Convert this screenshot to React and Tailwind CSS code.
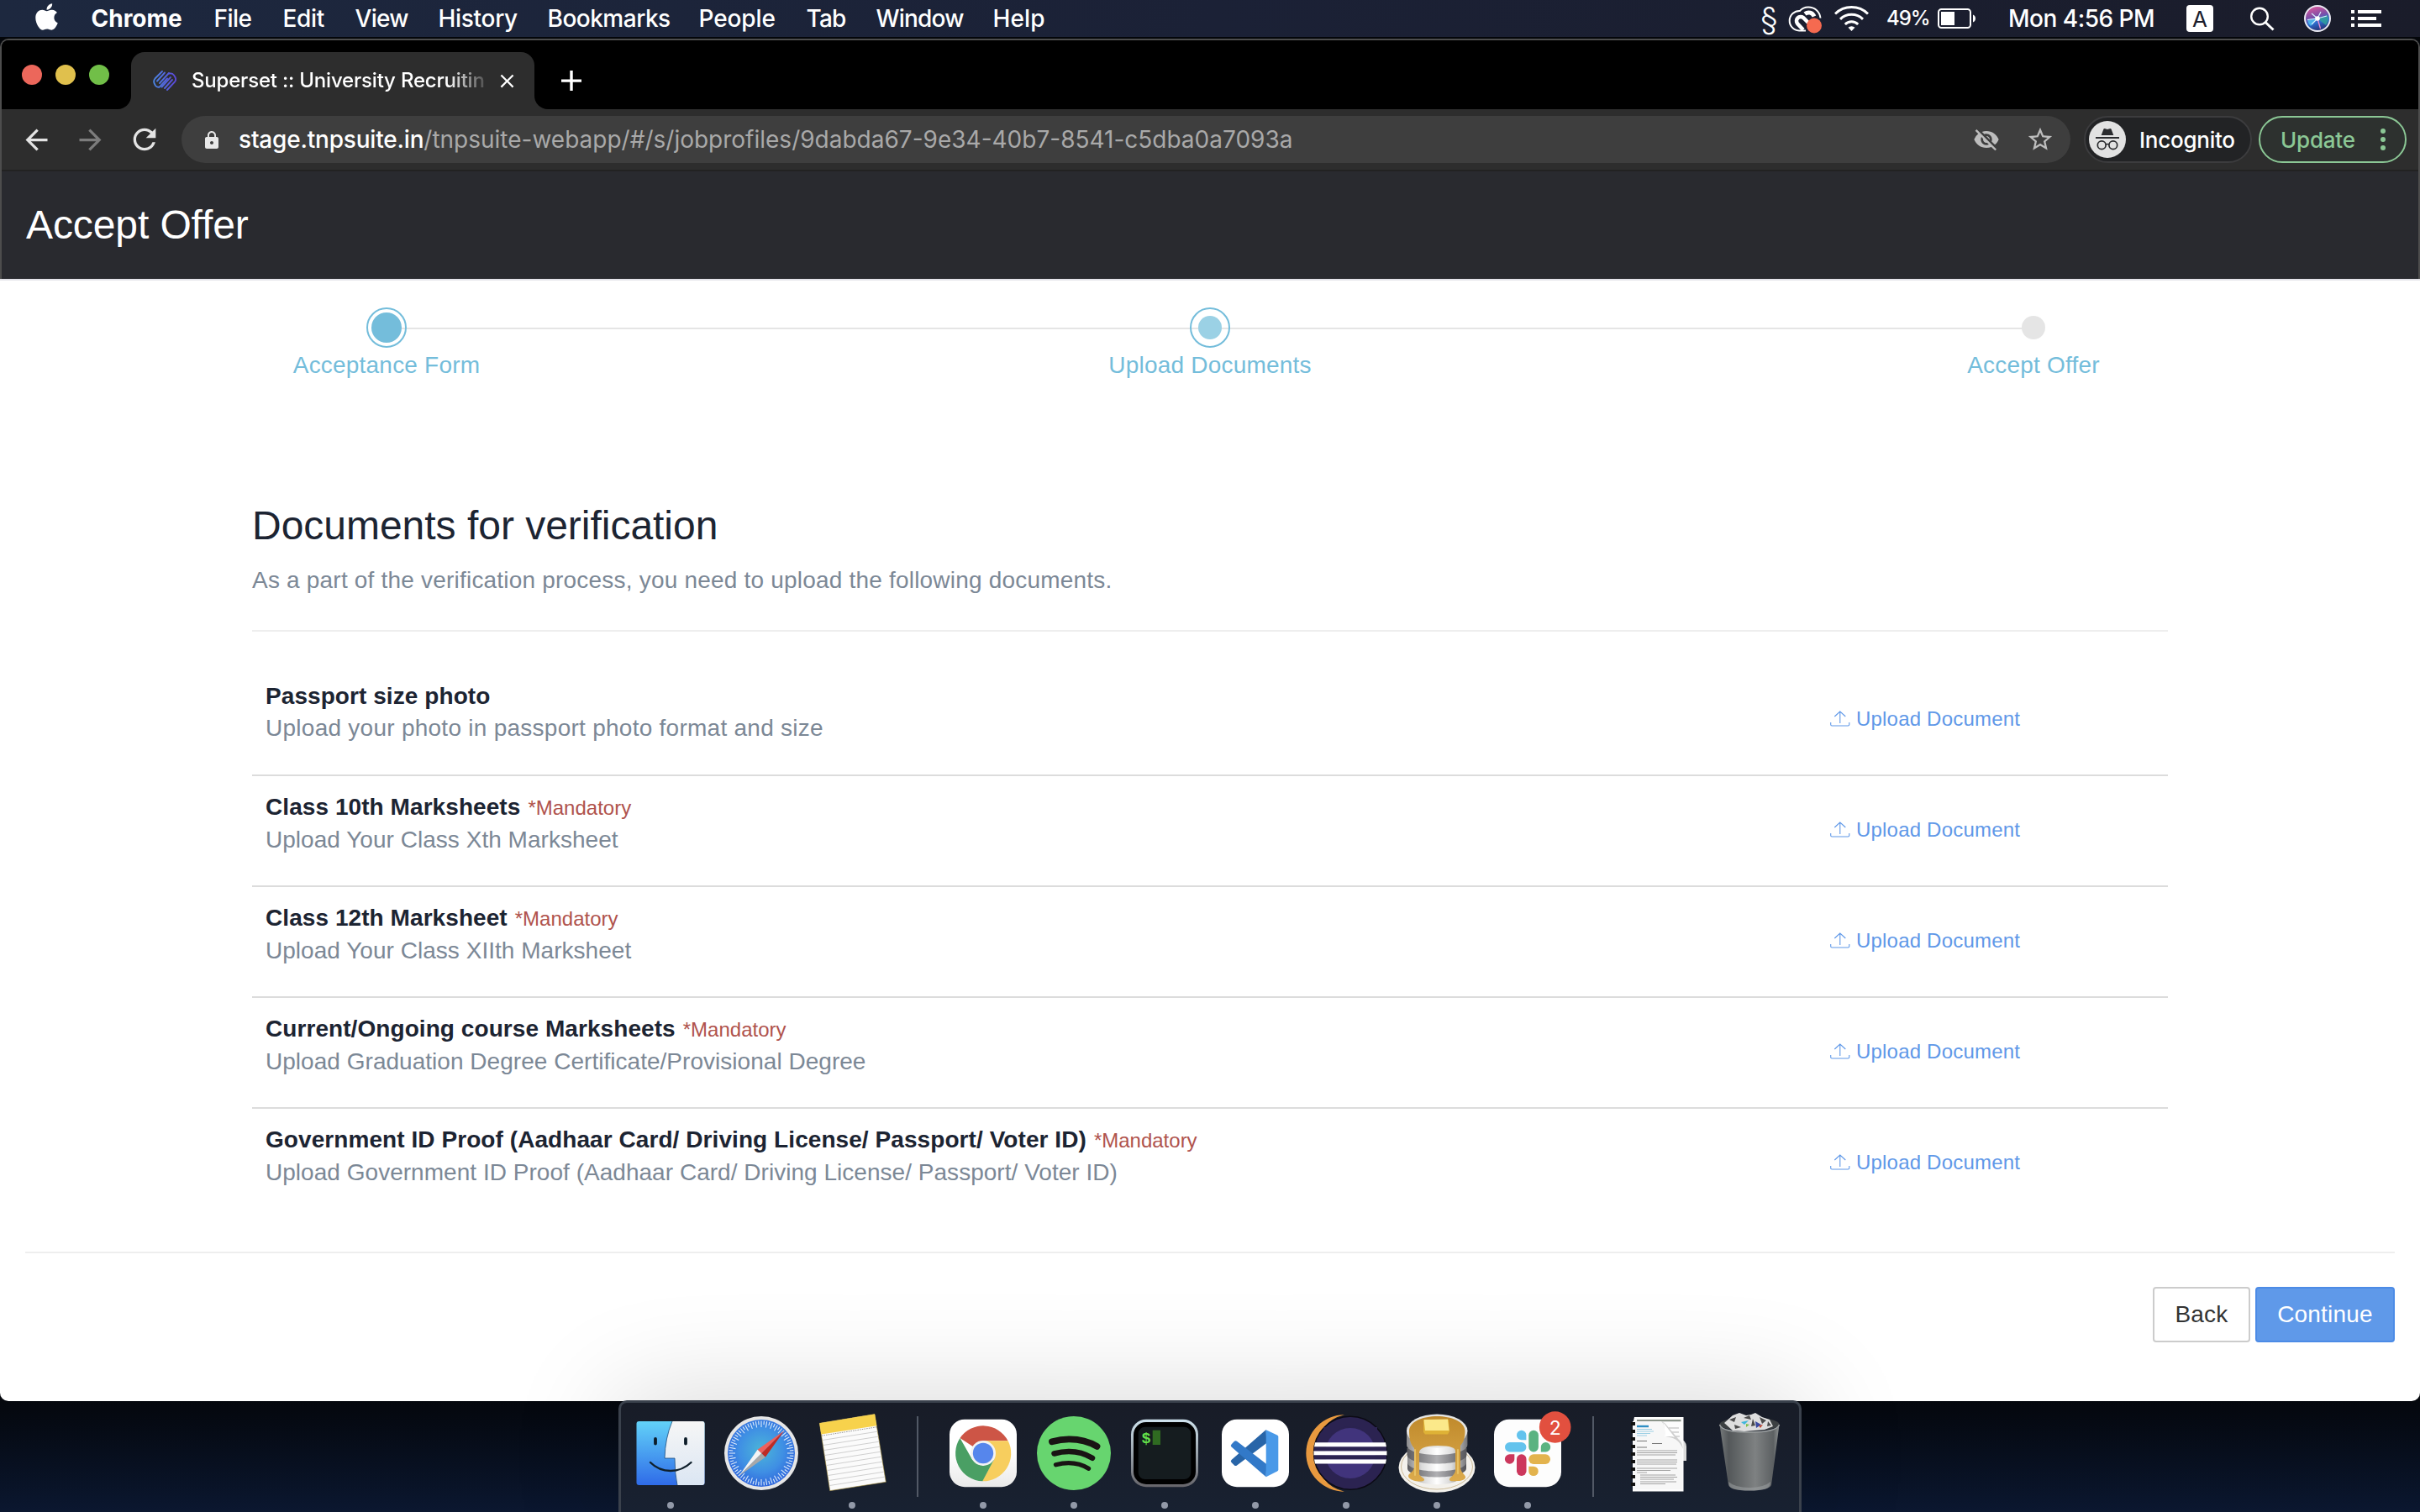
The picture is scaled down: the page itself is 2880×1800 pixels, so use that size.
import React from "react";
import { FaApple } from "react-icons/fa";
import {
  MdArrowBack,
  MdArrowForward,
  MdRefresh,
  MdLock,
  MdVisibilityOff,
  MdStarBorder,
  MdClose,
} from "react-icons/md";

const MENU = [
  ["Chrome", "w-[146px] font-bold"],
  ["File", "w-[82px] tracking-[-0.5px] font-medium"],
  ["Edit", "w-[86px] tracking-[-0.3px] font-medium"],
  ["View", "w-[99px] tracking-[-0.7px] font-medium"],
  ["History", "w-[130px] tracking-[-0.3px] font-medium"],
  ["Bookmarks", "w-[180px] tracking-[-0.5px] font-medium"],
  ["People", "w-[128px] tracking-[-0.1px] font-medium"],
  ["Tab", "w-[83px] tracking-[-0.8px] font-medium"],
  ["Window", "w-[139px] tracking-[-0.8px] font-medium"],
  ["Help", "w-[80px] tracking-[0.1px] font-medium"],
];

const DOCUMENTS = [
  { title: "Passport size photo", note: "Upload your photo in passport photo format and size", mandatory: false },
  { title: "Class 10th Marksheets", note: "Upload Your Class Xth Marksheet", mandatory: true },
  { title: "Class 12th Marksheet", note: "Upload Your Class XIIth Marksheet", mandatory: true },
  { title: "Current/Ongoing course Marksheets", note: "Upload Graduation Degree Certificate/Provisional Degree", mandatory: true },
  {
    title: "Government ID Proof (Aadhaar Card/ Driving License/ Passport/ Voter ID)",
    note: "Upload Government ID Proof (Aadhaar Card/ Driving License/ Passport/ Voter ID)",
    mandatory: true,
  },
];

/* ---------- menu bar ---------- */

function CloudIcon() {
  return (
    <svg className="ml-[13px] h-9 w-10" viewBox="0 0 40 36" fill="none" stroke="#fff" strokeWidth="2">
      <path d="M13 32.500a11.700 11.700 0 1 1 1-23.600C17 5.500 20.500 4.500 24 4.500c7.500 0 13.500 5 14.500 13" />
      <path d="M18 31.500l-7-7.500a5 5 0 0 1 7-7l6 6" strokeWidth="4.500" />
      <path d="M20 12.500c4-3 9-1.500 11 3" strokeWidth="5" />
      <path d="M13 32.500h8" />
      <circle cx="31" cy="26.500" r="9" fill="#f56a50" stroke="none" />
    </svg>
  );
}

function WifiIcon() {
  return (
    <svg className="ml-[15px] h-9 w-[41px]" viewBox="0 0 41 36" fill="none" stroke="#fff" strokeWidth="3">
      <path d="M1 12.500a28 28 0 0 1 39 0" />
      <path d="M7 18.800a19.500 19.500 0 0 1 27 0" />
      <path d="M12.800 25a11 11 0 0 1 15.400 0" />
      <path d="M20.500 33l-4-4.300a6 6 0 0 1 8 0z" fill="#fff" stroke="none" />
    </svg>
  );
}

function BatteryIcon() {
  return (
    <svg className="ml-[7px] h-6 w-[46px]" viewBox="0 0 46 24">
      <rect x="1" y="1" width="38" height="22" rx="3.500" fill="none" stroke="#fff" strokeWidth="2" />
      <rect x="4" y="4" width="16" height="16" fill="#fff" />
      <path d="M42 7.500c4 1 4 8 0 9z" fill="#fff" />
    </svg>
  );
}

function SearchIcon() {
  return (
    <svg className="ml-11 h-[29px] w-[29px]" viewBox="0 0 29 29" fill="none" stroke="#fff" strokeWidth="2.400">
      <circle cx="11" cy="11.500" r="9.800" />
      <path d="M18 18.500l9.500 9" strokeWidth="3" />
    </svg>
  );
}

function SiriIcon() {
  return (
    <svg className="ml-[35px] h-8 w-8" viewBox="0 0 32 32">
      <defs>
        <linearGradient id="siri" x1="0.3" y1="0" x2="0.6" y2="1">
          <stop offset="0" stopColor="#e0569a" />
          <stop offset="0.4" stopColor="#7d4fa8" />
          <stop offset="0.65" stopColor="#2d6fd0" />
          <stop offset="1" stopColor="#262a6b" />
        </linearGradient>
      </defs>
      <circle cx="16" cy="16" r="15" fill="url(#siri)" stroke="#e9e9f2" strokeWidth="2" />
      <path d="M16 16L28 12a13 13 0 0 1-2 12z" fill="#2fa59a" opacity="0.800" />
      <path d="M16 16L4 18a12 12 0 0 0 4 7z" fill="#4cc3f0" opacity="0.800" />
      <path d="M16 16L4 17.500M16 16l11-3M16 16l-7-6M16 16l4-8M16 16l-7 7" stroke="#d9f3ff" strokeWidth="1.200" />
      <path d="M16 16l3.500 12" stroke="#f08fd0" strokeWidth="1.300" />
      <circle cx="16" cy="16" r="2.800" fill="#fff" />
    </svg>
  );
}

function ListIcon() {
  return (
    <svg className="ml-6 h-5 w-9" viewBox="0 0 36 20" fill="#fff">
      <path d="M0 0h4v4H0zM8 0h28v4H8zM0 8h4v4H0zM8 8h22v4H8zM0 16h4v4H0zM8 16h28v4H8z" />
    </svg>
  );
}

function MenuBar() {
  return (
    <div className="flex h-11 items-center bg-linear-to-r from-[#1d283f] via-[#1b2136] to-[#1a1c2a] pl-[42px] pr-[46px] text-[28px] text-white">
      <FaApple className="mb-1 mr-[39.500px] h-9 w-[27px]" />
      {MENU.map(([label, cls]) => (
        <span key={label} className={cls}>
          {label}
        </span>
      ))}
      <div className="ml-auto flex items-center">
        <span className="w-5 text-center text-[38px] leading-[40px] font-light">§</span>
        <CloudIcon />
        <WifiIcon />
        <span className="ml-[21px] w-[54px] whitespace-nowrap text-[24px] font-medium tracking-[-1px]">49%</span>
        <BatteryIcon />
        <span className="ml-[38px] w-[175px] whitespace-nowrap font-medium tracking-[-0.5px]">Mon 4:56 PM</span>
        <span className="ml-[37px] flex h-8 w-8 items-center justify-center rounded bg-white text-[26px] text-[#1b1d2c]">A</span>
        <SearchIcon />
        <SiriIcon />
        <ListIcon />
      </div>
    </div>
  );
}

/* ---------- browser chrome ---------- */

function Favicon() {
  return (
    <svg className="h-6 w-7" viewBox="0 0 28 24" fill="none" strokeWidth="1.900" strokeLinecap="round">
      <defs>
        <linearGradient id="fav" x1="0" y1="0" x2="28" y2="0" gradientUnits="userSpaceOnUse">
          <stop offset="0" stopColor="#4a86e0" />
          <stop offset="1" stopColor="#5b45d6" />
        </linearGradient>
      </defs>
      <g stroke="url(#fav)">
        <path d="M11 1L2.500 9.500Q0.500 12 1.500 15L3 18Q5 20.500 8 19.500L17 9.500" />
        <path d="M14 2.500L5 12.500" />
        <path d="M19 3L8 15" />
        <path d="M17 23L26 13.500Q28 11 26.500 8L25 5.500Q23 3 20 3.500L19 3.500" />
        <path d="M14 21L23 11" />
        <path d="M10.500 19.500L21 8" />
      </g>
    </svg>
  );
}

function TabStrip() {
  return (
    <div className="flex h-[82px] items-end bg-black">
      <div className="mb-[29px] ml-6 flex gap-4">
        <span className="size-6 rounded-full bg-[#ec675b]" />
        <span className="size-6 rounded-full bg-[#e0c04d]" />
        <span className="size-6 rounded-full bg-[#71bf48]" />
      </div>
      <div className="ml-2.5 size-4 bg-[#2d2d2d]">
        <div className="size-4 rounded-br-2xl bg-black" />
      </div>
      <div className="flex h-[68px] w-[480px] items-center rounded-t-2xl bg-[#2d2d2d] pl-[26px]">
        <Favicon />
        <span className="ml-[18px] w-[354px] whitespace-nowrap text-[24px] font-medium tracking-[-0.2px] text-white [mask-image:linear-gradient(to_right,black_305px,transparent_358px)]">
          Superset :: University Recruitin
        </span>
        <MdClose className="ml-[8px] size-[27px] text-white" />
      </div>
      <div className="size-4 bg-[#2d2d2d]">
        <div className="size-4 rounded-bl-2xl bg-black" />
      </div>
      <svg className="mb-[22px] ml-[16px] size-6" viewBox="0 0 24 24" fill="#fff">
        <path d="M0 10.400h24v3.400H0zM10.300 0h3.400v24h-3.400z" />
      </svg>
    </div>
  );
}

function IncognitoBadge() {
  return (
    <svg className="size-11" viewBox="0 0 44 44">
      <circle cx="22" cy="22" r="22" fill="#e2e2e2" />
      <g fill="#2b2c2f">
        <path d="M14.700 17L17.500 9.500q.8-.8 2-.2l2.500.7 2.500-.7q1.200-.6 2 .2L29.300 17z" />
        <rect x="8" y="19" width="28" height="2" />
      </g>
      <g fill="none" stroke="#2b2c2f" strokeWidth="1.700">
        <circle cx="15.200" cy="28.700" r="4.900" />
        <circle cx="28.800" cy="28.700" r="4.900" />
        <path d="M20 28.200q2-1.400 4 0" />
      </g>
    </svg>
  );
}

function Toolbar() {
  return (
    <div className="flex h-[74px] items-center border-b-2 border-[#222] bg-[#2d2d2d] pl-[22px]">
      <MdArrowBack className="size-[39px] text-[#e4e4e4]" />
      <MdArrowForward className="ml-[25px] size-[39px] text-[#7c7c7c]" />
      <MdRefresh className="ml-[25px] size-10 text-[#e4e4e4]" />
      <div className="ml-6 flex h-14 w-[2248px] items-center rounded-full bg-[#3e3e3e] pl-6 text-[28px]">
        <MdLock className="mt-0.5 size-6 text-[#e8e8e8]" />
        <span className="ml-[20px] tracking-[-0.2px] text-white font-medium">stage.tnpsuite.in</span>
        <span className="text-[#a9a9a9]">/tnpsuite-webapp/#/s/jobprofiles/9dabda67-9e34-40b7-8541-c5dba0a7093a</span>
        <MdVisibilityOff className="ml-auto size-8 text-[#bdbdbd]" />
        <MdStarBorder className="ml-[31px] mr-[19px] size-[34px] text-[#bdbdbd]" />
      </div>
      <div className="ml-4 flex h-14 w-[200px] items-center rounded-full border-2 border-[#3c3c3e] bg-[#222325] pl-1 text-[26px] font-medium tracking-[-0.25px] text-white">
        <IncognitoBadge />
        <span className="ml-[16px]">Incognito</span>
      </div>
      <div className="ml-2 flex h-14 w-[176px] items-center rounded-full border-2 border-[#8bc795] bg-[#2d312f] pl-[24px] text-[26px] font-medium tracking-[-0.2px] text-[#8bc795]">
        <span>Update</span>
        <div className="ml-auto mr-[23px] flex flex-col gap-1">
          <span className="size-1.5 rounded-full bg-[#8bc795]" />
          <span className="size-1.5 rounded-full bg-[#8bc795]" />
          <span className="size-1.5 rounded-full bg-[#8bc795]" />
        </div>
      </div>
    </div>
  );
}

/* ---------- page ---------- */

function Step({ label, state }) {
  return (
    <div className="flex w-[320px] flex-col items-center">
      <div
        className={
          state === "todo"
            ? "flex size-12 items-center justify-center"
            : "flex size-12 items-center justify-center rounded-full border-2 border-[#74bddb]"
        }
      >
        {state === "done" && <span className="size-9 rounded-full bg-[#74bddb]" />}
        {state === "current" && <span className="size-7 rounded-full bg-[#9bd1e5]" />}
        {state === "todo" && <span className="size-7 rounded-full bg-[#e5e5e5]" />}
      </div>
      <span className="mt-px whitespace-nowrap text-[28px] leading-[40px] tracking-[0.2px] text-[#74bddb]">{label}</span>
    </div>
  );
}

function Stepper() {
  return (
    <div className="relative">
      <div className="absolute left-[160px] right-[160px] top-6 h-0.5 bg-[#e5e5e5]" />
      <div className="relative flex justify-between">
        <Step label="Acceptance Form" state="done" />
        <Step label="Upload Documents" state="current" />
        <Step label="Accept Offer" state="todo" />
      </div>
    </div>
  );
}

function UploadLink() {
  return (
    <a className="mt-[45px] flex h-[38px] items-center text-[24px] tracking-[0.2px] text-[#5f98e8]">
      <svg className="h-5 w-6" viewBox="0 0 24 20" fill="none" stroke="#5f98e8" strokeWidth="1.100">
        <path d="M0.700 14v2.500q0 1.500 1.500 1.500h19.100q1.500 0 1.500-1.500V14" />
        <path d="M11.800 15V1.200M5.300 7l6.500-6 6.500 6" />
      </svg>
      <span className="ml-[7px]">Upload Document</span>
    </a>
  );
}

function DocumentRow({ doc, last }) {
  return (
    <div className={last ? "flex h-[132px]" : "flex h-[132px] border-b-2 border-[#dcdcdc]"}>
      <div className="w-[1878px] pl-4 pt-[18px] text-[28px] leading-[38px]">
        <div className="flex items-baseline">
          <span className="font-bold tracking-[0.07px] text-[#1c2432]">{doc.title}</span>
          {doc.mandatory && <span className="ml-[9px] text-[24px] text-[#b0534d]">*Mandatory</span>}
        </div>
        <div className={doc.mandatory ? "tracking-[0.03px] text-[#7c8896]" : "tracking-[0.26px] text-[#7c8896]"}>{doc.note}</div>
      </div>
      <UploadLink />
    </div>
  );
}

function Page() {
  return (
    <div className="flex h-[1334px] flex-col rounded-b-[10px] bg-white pt-8 font-['Liberation_Sans',Arial,sans-serif]">
      <div className="mx-[300px]">
        <Stepper />
        <h1 className="mt-[145px] text-[48px] leading-[52px] tracking-[-0.02px] text-[#1c2432]">Documents for verification</h1>
        <p className="mt-[19px] text-[28px] leading-[40px] tracking-[0.2px] text-[#7c8896]">
          As a part of the verification process, you need to upload the following documents.
        </p>
        <div className="mt-[39px] h-0.5 bg-[#eeeeee]" />
        <div className="mt-10">
          {DOCUMENTS.map((doc, i) => (
            <DocumentRow key={doc.title} doc={doc} last={i === DOCUMENTS.length - 1} />
          ))}
        </div>
      </div>
      <div className="mx-[30px] mt-[38px] flex justify-end gap-1.5 border-t-2 border-[#eeeeee] pt-10 text-[28px] tracking-[0.2px]">
        <button className="h-[66px] w-[116px] rounded border-2 border-[#cccccc] bg-white text-[#333333]">Back</button>
        <button className="h-[66px] w-[166px] rounded border-2 border-[#4c8be6] bg-[#5f99e9] text-white">Continue</button>
      </div>
    </div>
  );
}

/* ---------- dock ---------- */

function Tile({ fill }) {
  return <rect x="8" y="7.700" width="80" height="80.500" rx="18" fill={fill} />;
}

function FinderIcon() {
  return (
    <>
      <defs>
        <linearGradient id="fb" x1="0" y1="0" x2="0" y2="1">
          <stop offset="0" stopColor="#62d2f8" />
          <stop offset="1" stopColor="#2f6be8" />
        </linearGradient>
        <linearGradient id="fw" x1="0" y1="0" x2="0" y2="1">
          <stop offset="0" stopColor="#f6f6f6" />
          <stop offset="1" stopColor="#dbe6f3" />
        </linearGradient>
      </defs>
      <rect x="7.500" y="10" width="81" height="76" rx="3" fill="url(#fb)" />
      <path d="M50 10Q41.500 30 41 54h12q0 18 3 32h29.500q3 0 3-3V13q0-3-3-3z" fill="url(#fw)" />
      <path d="M50 10Q41.500 30 41 54h12q0 18 3 32" fill="none" stroke="#1c4c7c" strokeWidth="0.800" />
      <path d="M30 31v5.500M66 31v5.500" stroke="#0c1c28" strokeWidth="3.800" strokeLinecap="round" />
      <path d="M24 59q10 10 24 10t24.500-10" fill="none" stroke="#10202c" strokeWidth="2.400" strokeLinecap="round" />
    </>
  );
}

const TICKS = Array.from({ length: 72 }, (_, i) => i);

function SafariIcon() {
  return (
    <>
      <defs>
        <radialGradient id="sf" cx="0.5" cy="0.45" r="0.55">
          <stop offset="0" stopColor="#4bb5d8" />
          <stop offset="0.6" stopColor="#3f8fe4" />
          <stop offset="1" stopColor="#2f66dc" />
        </radialGradient>
      </defs>
      <circle cx="48" cy="48" r="44" fill="#e6e6e6" />
      <circle cx="48" cy="48" r="40" fill="url(#sf)" />
      {TICKS.map((i) => (
        <path
          key={i}
          d={i % 2 ? "M48 9.500v4.500" : "M48 9.500v7.500"}
          stroke="#dcebfa"
          strokeWidth="1.100"
          transform={`rotate(${i * 5} 48 48)`}
        />
      ))}
      <path d="M75.300 21.300L43.500 43.700l4.700 4.500z" fill="#f0605c" />
      <path d="M75.300 21.300L52.800 52.700l-4.600-4.500z" fill="#bf2a24" />
      <path d="M21.500 75L43.500 43.700l4.700 4.500z" fill="#f4f4f4" />
      <path d="M21.500 75L52.800 52.700l-4.600-4.500z" fill="#a8a8a8" />
    </>
  );
}

function NotesIcon() {
  return (
    <>
      <path d="M9.300 12.300L75 1.500l13.300 80.800-66.600 10.400z" fill="#fbfbfb" stroke="#9c8433" strokeWidth="0.600" />
      <path d="M9.300 12.300L75 1.500l2.300 13.700-66 10.400z" fill="#f7d24c" />
      <path d="M11.800 27.200l65.800-10.400" stroke="#8a8a8a" strokeWidth="0.900" strokeDasharray="1.500 1.200" />
      {[0, 1, 2, 3, 4, 5, 6, 7, 8, 9].map((i) => (
        <path
          key={i}
          d="M12.800 32.500l65.500-10.300"
          stroke="#c4c4c4"
          strokeWidth="0.800"
          transform={`translate(${i * 0.95} ${i * 6})`}
        />
      ))}
    </>
  );
}

function ChromeIcon() {
  return (
    <>
      <defs>
        <linearGradient id="ct" x1="0" y1="0" x2="0" y2="1">
          <stop offset="0.5" stopColor="#ffffff" />
          <stop offset="1" stopColor="#e9e9e9" />
        </linearGradient>
      </defs>
      <Tile fill="url(#ct)" />
      <path d="M48 48L20.500 30A33.200 33.200 0 0 1 77.500 33.200H48z" fill="#cd5546" />
      <path d="M48 33.200H77.700A33.200 33.200 0 0 1 47 81.300L61 55.500z" fill="#f7ce5e" />
      <path d="M20.500 30A33.200 33.200 0 0 0 47.300 81.300L61 55.500 48 63 35 55.500z" fill="#4a9f64" />
      <circle cx="48" cy="48" r="15" fill="#f3f3f3" />
      <circle cx="48" cy="48" r="12.200" fill="#5686ec" />
    </>
  );
}

function SpotifyIcon() {
  return (
    <>
      <circle cx="48" cy="48" r="44" fill="#67d56f" />
      <g fill="none" stroke="#191414" strokeLinecap="round">
        <path d="M22 34.200Q52 26.500 75.500 39.800" strokeWidth="7.800" />
        <path d="M24.500 48.500Q50 41.500 70 53.800" strokeWidth="6.500" />
        <path d="M26.500 61.700Q49 56 65.500 66.300" strokeWidth="5.300" />
      </g>
    </>
  );
}

function TerminalIcon() {
  return (
    <>
      <defs>
        <linearGradient id="tm" x1="0" y1="0" x2="0" y2="1">
          <stop offset="0" stopColor="#cfe3ee" />
          <stop offset="1" stopColor="#66656a" />
        </linearGradient>
      </defs>
      <Tile fill="url(#tm)" />
      <rect x="11" y="11" width="74" height="74" rx="15" fill="#000" />
      <rect x="16.700" y="16.700" width="62.600" height="62.400" rx="8" fill="#151c1f" />
      <text x="20.500" y="35.500" fontSize="18.500" fontWeight="700" fontFamily="Liberation Mono, monospace" fill="#63e04a">
        $
      </text>
      <rect x="33.700" y="20.700" width="9.300" height="17.300" fill="#2f6a21" />
    </>
  );
}

function CodeIcon() {
  return (
    <>
      <Tile fill="#fff" />
      <path d="M60.700 20L19.500 56q-1.500 1.500 0 3l3.500 3.500q1.500 1 3 0L61.300 36z" fill="#2865a8" />
      <path d="M60.700 76.300L19.500 40.500q-1.500-1.500 0-3l3.500-3.700q1.500-1 3 0L61.300 61z" fill="#3279c8" />
      <path d="M60.700 20.200L74 26.500q1.300.7 1.300 2v39q0 1.300-1.300 2l-13.300 6.800z" fill="#4999e8" />
    </>
  );
}

function EclipseIcon() {
  return (
    <>
      <path d="M46 2.300A45.700 45.700 0 0 0 46 93.700Q14 86 12 48 14 10 46 2.300z" fill="#e8993f" />
      <circle cx="53" cy="47.800" r="43.500" fill="#2b2351" stroke="#0b0a14" strokeWidth="1.500" />
      <circle cx="53" cy="48" r="30" fill="#41347c" />
      <path d="M21 48a32 32 0 0 1 64 0V17H21z" fill="#2b2351" />
      <path d="M11 35.200h84l1 5.200H10zM9.500 45.200h87v5.200h-87zM10 55.200h86l-1 5.400H11z" fill="#fff" />
      <path d="M10 40.400h86v4.800H10zM10 50.400h86v4.800H10z" fill="#2b2351" />
    </>
  );
}

function PancakeIcon() {
  return (
    <>
      <defs>
        <linearGradient id="pk" x1="0" y1="0" x2="1" y2="0">
          <stop offset="0" stopColor="#8a8a8c" />
          <stop offset="0.25" stopColor="#dcdcdc" />
          <stop offset="0.5" stopColor="#ffffff" />
          <stop offset="0.75" stopColor="#dcdcdc" />
          <stop offset="1" stopColor="#77777a" />
        </linearGradient>
        <linearGradient id="pd" x1="0" y1="0" x2="1" y2="0">
          <stop offset="0" stopColor="#5c5c60" />
          <stop offset="0.5" stopColor="#b0b0b3" />
          <stop offset="1" stopColor="#55555a" />
        </linearGradient>
        <linearGradient id="sy" x1="0" y1="0" x2="0" y2="1">
          <stop offset="0" stopColor="#c08a2c" />
          <stop offset="1" stopColor="#dcab4c" />
        </linearGradient>
      </defs>
      <ellipse cx="48" cy="65" rx="45.500" ry="29.700" fill="#f3f1ec" />
      <ellipse cx="48" cy="64" rx="42.500" ry="27" fill="none" stroke="#c9b58e" strokeWidth="0.900" />
      <path d="M19 66v8c0 15 58 15 58 0v-8z" fill="url(#pk)" />
      <path d="M13 58v8c0 14 70 14 70 0v-8z" fill="url(#pd)" />
      <path d="M13 51v8c0 14 70 14 70 0v-8z" fill="url(#pk)" />
      <path d="M12.500 42v8c0 14 71 14 71 0v-8z" fill="url(#pd)" />
      <path d="M12 20v18c0 16 72.400 16 72.400 0V20z" fill="url(#pk)" />
      <ellipse cx="48.200" cy="21.500" rx="36.200" ry="20" fill="#e4e4e2" />
      <path
        d="M15 22c0-24 66.500-24 66.500 0 0 10-3 14-5.500 17v26c0 5 5 8 6 11s-5 5-9 5-9 1-10-1c-1-3 6-5 7-11V45c0-3-5-6-21-6s-22 4-22 8v26c1 3 7 5 6 7s-9 2-14 0-6-5-4-7 6-4 6-9V42c-4-4-6-10-6-20z"
        fill="url(#sy)"
      />
      <path d="M22 44v30M73 44v28" stroke="#f0cf73" strokeWidth="2" strokeLinecap="round" opacity="0.700" />
      <path d="M32 9l30-1 1 14-2 3.500H34L32 23z" fill="#dfb236" />
      <path d="M32.500 8l28.500-.5L62.500 21H34z" fill="#fbe98a" />
    </>
  );
}

function SlackIcon() {
  return (
    <>
      <Tile fill="#fdfdfd" />
      <g fill="#63c3ed">
        <rect x="21" y="35" width="25.400" height="11.500" rx="5.700" />
        <path d="M46.400 32.200h-5.700a5.700 5.700 0 1 1 5.700-5.700z" />
      </g>
      <g fill="#5bb381">
        <rect x="49.300" y="20.700" width="11.600" height="25.700" rx="5.800" />
        <path d="M63.800 46.400v-5.700a5.700 5.700 0 1 1 5.700 5.700z" />
      </g>
      <g fill="#cc375c">
        <rect x="35" y="49.300" width="11.500" height="25.700" rx="5.700" />
        <path d="M32.300 49.300V55a5.700 5.700 0 1 1-5.700-5.700z" />
      </g>
      <g fill="#e3b34d">
        <rect x="49.300" y="49.300" width="25.700" height="11.700" rx="5.800" />
        <path d="M49.300 63.700H55a5.700 5.700 0 1 1-5.700 5.700z" />
      </g>
      <circle cx="80.700" cy="17" r="18.800" fill="#e2503f" />
      <text x="80.700" y="25.500" textAnchor="middle" fontSize="23" fontFamily="Inter, sans-serif" fill="#fff">
        2
      </text>
    </>
  );
}

const HOLES = Array.from({ length: 9 }, (_, i) => 11 + i * 9);

function PapersIcon() {
  return (
    <>
      <path d="M74 32q6 0 7 8v17h-7z" fill="#dadada" />
      <path d="M19 5h58.500v88.500H17V14z" fill="#fcfcfc" />
      <path d="M22 8h52.500v2.200H22z" fill="#8b948a" />
      <path d="M17 10h34c5 3 14 14 25 24v57H17z" fill="#f7f7f7" />
      <path d="M60 18h12M62 23h10M66 28h7" stroke="#b5b5b5" strokeWidth="1" />
      <path d="M51 10c4 3 5 12 4 19 8-1 17 2 22 14-1-6-2-8-5-11L56 13q-3-3-5-3z" fill="#cfcfcf" />
      <path d="M53 11l14 18q-5-2-12 0 1-10-2-18z" fill="#fff" />
      <path d="M22 16h14" stroke="#2f8fc4" strokeWidth="2.400" />
      <path d="M22 19.500h18M22 22h20M22 24.500h16M22 27h12" stroke="#9ccfe4" strokeWidth="1" />
      <path d="M22 33.500h12M40 36.500h12M22 41h12" stroke="#777" strokeWidth="1" />
      <path
        d="M22 45h48M22 47.500h48M22 50h46M22 56h48M22 58.500h48M22 61h47M22 66h48M22 68.500h40M22 71h12M26 74h42M26 76.500h44M26 79h40M26 82h43M26 84.500h30"
        stroke="#a3a3a3"
        strokeWidth="1.100"
      />
      {HOLES.map((y) => (
        <rect key={y} x="15" y={y} width="5" height="4" fill="#111" />
      ))}
    </>
  );
}

function TrashIcon() {
  return (
    <>
      <defs>
        <linearGradient id="tr" x1="0" y1="0" x2="1" y2="0">
          <stop offset="0" stopColor="#777b7c" />
          <stop offset="0.15" stopColor="#54585a" />
          <stop offset="0.6" stopColor="#7e8182" />
          <stop offset="0.9" stopColor="#5c6062" />
          <stop offset="1" stopColor="#8f9394" />
        </linearGradient>
      </defs>
      <ellipse cx="48" cy="13.500" rx="35.500" ry="8" fill="#3c4042" />
      <path d="M12.500 14q3 9 35.500 9t35.500-9L74 86q-3 6.500-26 6.500T23 86z" fill="url(#tr)" />
      <path d="M23 82q8 7 25 7t25-7l-.8 4.500q-3 6-24.200 6t-24.200-6z" fill="#a2a6a7" opacity="0.500" />
      <path d="M12.500 14q3 9 35.500 9t35.500-9" fill="none" stroke="#9ca0a1" strokeWidth="1.500" />
      <path d="M18 12l10-9 8-3 8 3 6-1 5-2 8 5 9 3 4 8-10 4-24 2-14-1z" fill="#dedede" />
      <path d="M24 8l8-3-2 6zM41 6l7-3 2 5zM60 5l8 4-5 4zM30 14l8 3-7 2zM70 10l4 5-5 1zM50 16l2-9 3 8z" fill="#4b4b4b" />
      <path d="M38 11l9-2-5 5z" fill="#3fb6dc" />
      <path d="M44 13l4 1-4 3z" fill="#7fbf4a" />
      <path d="M55 10l7 4-6 4z" fill="#3a4aa0" />
      <path d="M59 15l5-1-3 4z" fill="#c0492f" />
    </>
  );
}

function DockItem({ icon: Icon, running }) {
  return (
    <div className="flex w-[108px] flex-col items-center pt-3">
      <svg className="size-24 overflow-visible" viewBox="0 0 96 96">
        <Icon />
      </svg>
      {running && <span className="mt-2.5 size-2 rounded-full bg-[#9299a8]" />}
    </div>
  );
}

function DockDivider() {
  return (
    <div className="flex w-12 justify-center pt-4">
      <span className="h-24 w-0.5 bg-[#525966]" />
    </div>
  );
}

function Dock() {
  return (
    <div className="relative mx-auto flex h-[133px] w-[1408px] rounded-t-[10px] border-x-3 border-t-3 border-[#3a414c] bg-linear-to-b from-[#181c27] to-[#182131] px-[5px] shadow-[0_0_130px_rgba(0,0,0,0.17)]">
      <DockItem icon={FinderIcon} running />
      <DockItem icon={SafariIcon} />
      <DockItem icon={NotesIcon} running />
      <DockDivider />
      <DockItem icon={ChromeIcon} running />
      <DockItem icon={SpotifyIcon} running />
      <DockItem icon={TerminalIcon} running />
      <DockItem icon={CodeIcon} running />
      <DockItem icon={EclipseIcon} running />
      <DockItem icon={PancakeIcon} running />
      <DockItem icon={SlackIcon} running />
      <DockDivider />
      <DockItem icon={PapersIcon} />
      <DockItem icon={TrashIcon} />
    </div>
  );
}

export default function App() {
  return (
    <div className="flex h-[1800px] w-[2880px] flex-col overflow-hidden bg-linear-to-b from-[#04060a] from-92% to-[#0b1730] font-['Inter',sans-serif]">
      <MenuBar />
      <div className="mt-0.5 flex flex-col">
        <div className="overflow-hidden rounded-t-[10px] border-x-2 border-t-2 border-[#4d4d4d]">
          <TabStrip />
          <Toolbar />
          <header className="flex h-32 items-center bg-[#292a2f] pl-[29px] font-['Liberation_Sans',Arial,sans-serif] text-[48px] tracking-[-0.1px] text-white">
            Accept Offer
          </header>
        </div>
        <div className="h-0.5 bg-[#e4e4ea]" />
        <Page />
      </div>
      <div className="-mt-px">
        <Dock />
      </div>
    </div>
  );
}
